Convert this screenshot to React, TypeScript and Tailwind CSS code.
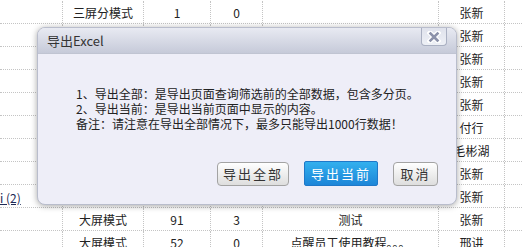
import React from "react";

const font = { fontFamily: '"Noto Sans CJK SC", "Noto Sans", sans-serif' };

type Row = string[];
const rows: Row[] = [
  ["", "三屏分模式", "1", "0", "", "张新", ""],
  ["", "", "", "", "", "张新", ""],
  ["", "", "", "", "", "张新", ""],
  ["", "", "", "", "", "张新", ""],
  ["", "", "", "", "", "张新", ""],
  ["", "", "", "", "", "付行", ""],
  ["", "", "", "", "", "毛彬湖", ""],
  ["", "", "", "", "", "张新", ""],
  ["LINK", "", "", "", "", "张新", ""],
  ["", "大屏模式", "91", "3", "测试", "张新", ""],
  ["", "大屏模式", "52", "0", "点醒员工使用教程。。。", "邢讲", ""],
];

function CloseIcon() {
  return (
    <svg width="14" height="12" viewBox="0 0 14 12">
      <path
        d="M3 2 L11 10 M11 2 L3 10"
        stroke="#ffffff"
        strokeWidth="5"
        strokeLinecap="square"
      />
      <path
        d="M3.5 2.5 L10.5 9.5 M10.5 2.5 L3.5 9.5"
        stroke="#8c92aa"
        strokeWidth="2.6"
        strokeLinecap="square"
      />
    </svg>
  );
}

export default function App() {
  return (
    <div className="relative w-[522px] h-[247px] overflow-hidden bg-white text-[12px] text-[#222]" style={font}>
      <div className="mt-px">
        {rows.map((r, i) => (
          <div
            key={i}
            className="grid grid-cols-[62px_81px_67px_52px_176px_66px_1fr] h-[23px] border-b border-dotted border-[#c4c4c4]"
          >
            {r.map((c, j) => (
              <div
                key={j}
                className={
                  "flex items-center pt-[2px] whitespace-nowrap overflow-hidden " +
                  (j === 0 ? "justify-start" : "justify-center border-l border-dotted border-[#c4c4c4]")
                }
              >
                {c === "LINK" ? (
                  <span className="underline text-[#1e2a55] text-[12px] mt-[2px]">i (2)</span>
                ) : (
                  c
                )}
              </div>
            ))}
          </div>
        ))}
      </div>

      <div className="absolute left-[37px] top-[27px] w-[420px] h-[178px] rounded-[8px] border border-[#b9bdcc] bg-[#eeeef8] shadow-[0_1px_6px_rgba(0,0,0,0.35)] overflow-hidden flex flex-col">
        <div className="relative h-[26px] shrink-0 border-b border-[#c0c4d2] bg-gradient-to-b from-[#e8eaf2] to-[#c6cad9] flex items-center pl-[9px] text-[13px] text-[#333]">
          导出Excel
          <div className="absolute right-[9px] top-0 w-[26px] h-[18px] border border-t-0 border-[#aab0c2] rounded-b-[4px] bg-gradient-to-b from-[#dfe2ec] to-[#eef0f6] flex items-center justify-center">
            <CloseIcon />
          </div>
        </div>
        <div className="flex-1 flex flex-col">
          <div className="pl-[38px] pt-[32px] leading-[15px] text-[12px] text-[#222]">
            <div>1、导出全部：是导出页面查询筛选前的全部数据，包含多分页。</div>
            <div>2、导出当前：是导出当前页面中显示的内容。</div>
            <div>备注：请注意在导出全部情况下，最多只能导出1000行数据！</div>
          </div>
          <div className="mt-auto mb-[18px] pr-[18px] flex justify-end gap-[15px]">
            <button className="w-[72px] h-[24px] rounded-[4px] border border-[#a3a3a3] bg-gradient-to-b from-[#ffffff] to-[#dedede] text-[13px] tracking-[2px] text-[#333] flex items-center justify-center">
              导出全部
            </button>
            <button className="w-[74px] h-[25px] -mt-px rounded-[2px] border border-[#1f78c8] bg-gradient-to-b from-[#33b0ee] to-[#1d86d8] text-[13px] tracking-[2px] text-white flex items-center justify-center">
              导出当前
            </button>
            <button className="w-[45px] h-[24px] rounded-[4px] border border-[#a3a3a3] bg-gradient-to-b from-[#ffffff] to-[#dedede] text-[13px] tracking-[2px] text-[#333] flex items-center justify-center">
              取消
            </button>
          </div>
        </div>
      </div>
    </div>
  );
}
